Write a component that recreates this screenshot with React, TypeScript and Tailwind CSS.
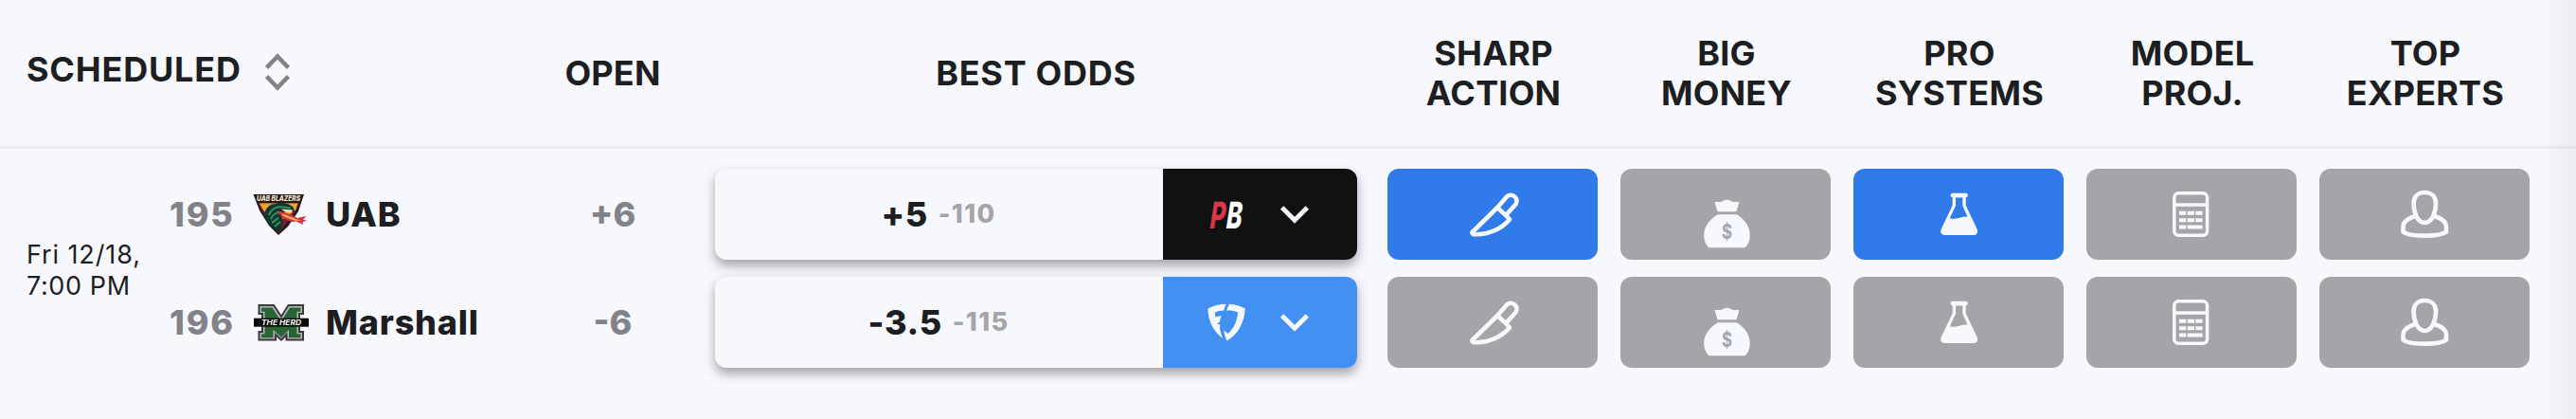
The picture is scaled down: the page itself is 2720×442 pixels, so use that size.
import React from "react";

interface Team {
  rotation: number;
  name: string;
  logo: React.ReactNode;
  open: string;
  line: string;
  price: string;
  book: "pointsbet" | "fanduel";
  signals: boolean[];
}

const UabLogo = () => (
  <svg viewBox="0 0 60 60" className="h-[60px] w-[60px] shrink-0">
    <path d="M1.500 9H55L49 27L38 43L28 52L18 42L8 26Z" fill="#241c1c" />
    <path d="M6.500 18H50L44 30L28 50L13 31Z" fill="#7c1b30" />
    <path d="M8 18.500H48.500L46 26L34 34L24 40L11.500 25Z" fill="#f0a32c" />
    <path
      d="M13 31C14 23 19 19 25 19C31 16 40 19 44 23L45 28L36 27L31 31C34 37 33 44 28 49C20 43 15 38 13 31Z"
      fill="#15362c"
    />
    <path
      d="M18 31C19 26 24 23 29 22L41 23.500M20 35C22 30 26 28 30 28M21 39L28 34M24 43L30 38"
      stroke="#2b8e64"
      strokeWidth="2.200"
      fill="none"
    />
    <path d="M31 24.500L43 25.500L42 28.500L35 27.500Z" fill="#e8dcc0" />
    <path
      d="M26 27C32 26 36 30 42 30.500L48 34L57.500 32L54 35.500L58 37L53.500 38L54 41L47 37.500L43 38C39 37 35 36 32 33Z"
      fill="#d32f3c"
    />
    <path
      d="M31 29.500C37 30.500 42 33.500 48 35.500L53 36.500L46 36.800C41 35 35 34.500 31 29.500Z"
      fill="#ffb45c"
    />
    <text
      x="5"
      y="16.300"
      textLength="46"
      lengthAdjust="spacingAndGlyphs"
      fill="#f3e6c8"
      className="font-['Inter'] text-[8px] font-extrabold italic"
    >
      UAB BLAZERS
    </text>
  </svg>
);

const MarshallLogo = () => (
  <svg viewBox="0 0 62 60" className="h-[60px] w-[62px] shrink-0">
    <path
      d="M7.500 12H23L31 24L38.500 12H54V21H50V40H54V48.500H36.500V43L31 48.500L25 43V48.500H7.500V40H11V21H7.500Z"
      fill="#b5b9b6"
      stroke="#3d393c"
      strokeWidth="2"
    />
    <path
      d="M10 14.500H21.500L31 29L40 14.500H51.500V18.800H47.500V42.200H51.500V46.300H39V38L31 46L22.500 38V46.300H10V42.200H13.500V18.800H10Z"
      fill="#286434"
    />
    <rect x="2" y="25.700" width="58" height="9" fill="#0b0b0b" />
    <text
      x="10"
      y="33.200"
      textLength="42"
      lengthAdjust="spacingAndGlyphs"
      fill="#f4f4f4"
      className="font-['Inter'] text-[8px] font-bold italic"
    >
      THE HERD
    </text>
  </svg>
);

const SortIcon = () => (
  <svg
    viewBox="0 0 26 40"
    className="-mt-[2px] h-10 w-[26px]"
    fill="none"
    stroke="#838288"
    strokeWidth="4.600"
  >
    <path d="M1.500 15.500L13 3.500L24.500 15.500M1.500 24.500L13 36.500L24.500 24.500" />
  </svg>
);

const ChevronIcon = () => (
  <svg viewBox="0 0 30 19" className="h-[19px] w-[30px]" fill="none">
    <path d="M1.700 2L15 15.300L28.300 2" stroke="#f7f8fd" strokeWidth="4.800" />
  </svg>
);

const PointsBetLogo = () => (
  <svg viewBox="0 0 40 40" className="h-10 w-10 overflow-visible">
    <g
      transform="translate(3.500 34.500) skewX(-3) scale(0.640 1)"
      className="font-['Inter'] text-[39px] font-extrabold italic"
    >
      <text x="-2" y="0" fill="#dc3548">
        P
      </text>
      <text x="25" y="0" fill="#ffffff">
        B
      </text>
    </g>
  </svg>
);

const FanDuelLogo = () => (
  <svg viewBox="0 0 40 40" className="h-10 w-10" fill="#f7f8fd">
    <path d="M0.500 5.500C6 2.500 13 0.800 19.500 0.800L17 7.500C14 7.500 10.500 8.300 8 9.500C7.900 11.300 8 13 8.500 14.500L14.500 13L12.500 20L9.700 21.500L13.200 22.500C12.500 27 14 32 16.200 37C6 29.500 0.500 18 0.500 5.500Z" />
    <path d="M23 0.800C29 1.200 34.500 2.600 39.700 5.500C39.500 19 32 33.500 20.500 39.500C19 36 17.500 32.500 17.500 28.500L21.500 32C28 26.500 31.500 18 32 9.500C28.500 8 24.500 7.400 20 7.600Z" />
  </svg>
);

const KnifeIcon = () => (
  <svg
    viewBox="0 0 60 96"
    className="h-24 w-[60px]"
    fill="none"
    stroke="#f7f8fd"
    strokeWidth="4.600"
    strokeLinejoin="round"
  >
    <path d="M35 41L45 29.500C50 24.500 58.500 31 54.500 37.500L44.500 48.500" />
    <path d="M35 41L8.500 67C8 68 9 69 10.500 69.200C26 70 40 63 48 53.500L44.500 49.500Z" />
  </svg>
);

const MoneyBagIcon = () => (
  <svg viewBox="0 0 60 96" className="h-24 w-[60px]">
    <path
      d="M18.500 35H24Q26.500 35 28 33.500Q31.500 31.800 35 33.500Q36.500 35 39 35H44.500L41.500 45.300H21.500Z"
      fill="#f7f8fd"
    />
    <path
      d="M22 48.300H42C50.500 54 55.700 61 55.700 70C55.700 76 54 80 50.500 83.300H12.500C9 80 7.200 76 7.200 70C7.200 61 13 53.500 22 48.300Z"
      fill="#f7f8fd"
    />
    <text
      x="31.500"
      y="73.500"
      textAnchor="middle"
      fill="#a5a4a9"
      className="font-['Inter'] text-[22px] font-bold"
      textLength="11"
      lengthAdjust="spacingAndGlyphs"
    >
      $
    </text>
  </svg>
);

const FlaskIcon = () => (
  <svg viewBox="0 0 60 96" className="h-24 w-[60px]" fill="#f7f8fd">
    <rect x="21.700" y="25.800" width="18" height="4.500" rx="1.800" />
    <path
      fillRule="evenodd"
      d="M23.700 28H37.700V38.500L49.300 63C51.200 67 49.500 70 46 70H15.500C12 70 10 67 12 63L23.700 38.500ZM27 30.300V39L20.800 52.200C27 54.500 32 50 39.500 50.500L34.300 39V30.300Z"
    />
  </svg>
);

const CalculatorIcon = () => (
  <svg viewBox="0 0 60 96" className="h-24 w-[60px]" fill="#f7f8fd">
    <rect
      x="11.800"
      y="25.800"
      width="34.800"
      height="44.500"
      rx="4.500"
      fill="none"
      stroke="#f7f8fd"
      strokeWidth="3.500"
    />
    <rect x="12" y="36.300" width="35" height="3.500" />
    <path d="M17 44.800h7.300v4H17zM25.700 44.800h7.300v4h-7.300zM34.300 44.800h7.300v4h-7.300zM17 52.200h7.300v4H17zM25.700 52.200h7.300v4h-7.300zM34.300 52.200h7.300v4h-7.300zM17 59.500h7.300v4H17zM25.700 59.500h15.900v4H25.700z" />
  </svg>
);

const ExpertIcon = () => (
  <svg
    viewBox="0 0 60 96"
    className="h-24 w-[60px]"
    fill="none"
    stroke="#f7f8fd"
    strokeWidth="4.600"
    strokeLinejoin="round"
  >
    <path d="M30.300 25C23 25 18.600 29.500 18.600 36.500C18.600 46 22.500 57 30.300 57C38 57 42 46 42 36.500C42 29.500 37.500 25 30.300 25Z" />
    <path d="M20.500 50C13 52 7.500 56 7.500 61.500V66.500C14 72 46.500 72 53 66.500V61.500C53 56 47.500 52 40 50" />
  </svg>
);

const signalColumns = [
  { title: ["SHARP", "ACTION"], Icon: KnifeIcon },
  { title: ["BIG", "MONEY"], Icon: MoneyBagIcon },
  { title: ["PRO", "SYSTEMS"], Icon: FlaskIcon },
  { title: ["MODEL", "PROJ."], Icon: CalculatorIcon },
  { title: ["TOP", "EXPERTS"], Icon: ExpertIcon },
];

const teams: Team[] = [
  {
    rotation: 195,
    name: "UAB",
    logo: <UabLogo />,
    open: "+6",
    line: "+5",
    price: "-110",
    book: "pointsbet",
    signals: [true, false, true, false, false],
  },
  {
    rotation: 196,
    name: "Marshall",
    logo: <MarshallLogo />,
    open: "-6",
    line: "-3.5",
    price: "-115",
    book: "fanduel",
    signals: [false, false, false, false, false],
  },
];

const TableHeader: React.FC = () => {
  return (
    <div className="grid h-[157px] grid-cols-[560px_174px_720px_repeat(5,246px)] items-center border-b-[3px] border-[#ebecf1] text-center text-[36px] leading-[42px] font-bold tracking-[0.2px]">
      <div className="flex items-center gap-[25px] pl-7">
        <span className="-mt-[8px] tracking-[0.8px]">SCHEDULED</span>
        <SortIcon />
      </div>
      <div className="-mt-[1px]">OPEN</div>
      <div className="-mt-[1px] tracking-[0.7px]">BEST ODDS</div>
      {signalColumns.map(({ title }) => (
        <div key={title[1]} className="-mt-[1px]">
          {title[0]}
          <br />
          {title[1]}
        </div>
      ))}
    </div>
  );
};

const OddsCard: React.FC<{ team: Team }> = ({ team }) => {
  return (
    <div className="flex h-24 rounded-xl bg-[#f7f8fd] shadow-[0_6px_12px_rgba(40,30,40,0.4)]">
      <div className="flex w-[473px] items-center justify-center gap-[11px] pr-[1px] font-extrabold">
        <span className="text-[36px] tracking-[0.6px]">{team.line}</span>
        <span className="text-[27px] tracking-[1.4px] text-[#a5a4a9]">
          {team.price}
        </span>
      </div>
      <div
        className={`flex flex-1 items-center rounded-r-xl pl-[47px] gap-[37px] ${
          team.book === "pointsbet" ? "bg-[#111111]" : "bg-[#4190f2]"
        }`}
      >
        {team.book === "pointsbet" ? <PointsBetLogo /> : <FanDuelLogo />}
        <ChevronIcon />
      </div>
    </div>
  );
};

const App: React.FC = () => {
  return (
    <div className="relative h-[442px] w-[2720px] overflow-hidden bg-[#f7f8fd] font-['Inter',sans-serif] text-[#1d1e22]">
      <TableHeader />

      {/* Game */}
      <div className="grid grid-cols-[560px_174px_719px_repeat(5,246px)] pt-[21px]">
        <div className="flex pl-[28px]">
          <div className="mt-[74px] w-[151px] text-[27px] leading-[33px] whitespace-nowrap">
            <div className="tracking-[0.9px]">Fri 12/18,</div>
            <div className="tracking-[0.6px]">7:00 PM</div>
          </div>
          <div className="flex flex-col gap-[18px] text-[36px] font-extrabold">
            {teams.map((team) => (
              <div key={team.rotation} className="flex h-24 items-center">
                <span className="w-[87px] tracking-[1.8px] text-[#838288]">
                  {team.rotation}
                </span>
                <span className="w-[78px]">{team.logo}</span>
                <span className="tracking-[0.8px]">{team.name}</span>
              </div>
            ))}
          </div>
        </div>

        <div className="flex flex-col gap-[18px] text-center text-[36px] leading-[96px] font-extrabold text-[#838288]">
          {teams.map((team) => (
            <div key={team.rotation}>{team.open}</div>
          ))}
        </div>

        <div className="flex flex-col gap-[18px] pr-[20px] pl-[21px]">
          {teams.map((team) => (
            <OddsCard key={team.rotation} team={team} />
          ))}
        </div>

        {signalColumns.map(({ title, Icon }, index) => (
          <div key={title[1]} className="flex flex-col gap-[18px] px-3">
            {teams.map((team) => (
              <div
                key={team.rotation}
                className={`flex h-24 justify-center rounded-xl ${
                  team.signals[index] ? "bg-[#307ae9]" : "bg-[#a5a4a9]"
                }`}
              >
                <Icon />
              </div>
            ))}
          </div>
        ))}
      </div>

      {/* Scroll shadow */}
      <div className="absolute inset-y-0 right-0 w-9 bg-linear-to-r from-transparent to-[#0000000c]" />
    </div>
  );
};

export default App;
